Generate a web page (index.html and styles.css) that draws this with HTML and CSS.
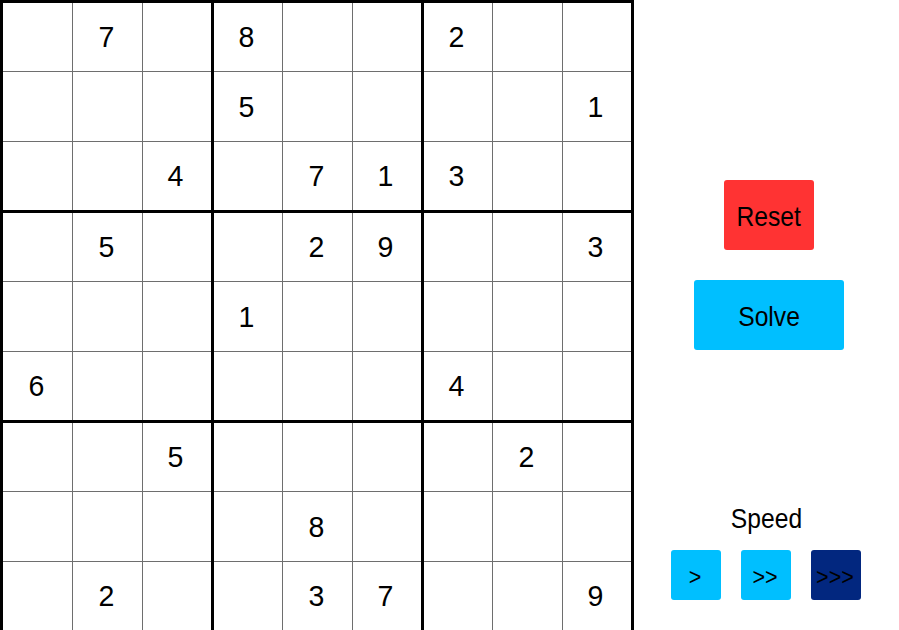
FILE: index.html
```html
<!DOCTYPE html>
<html>
<head>
<meta charset="utf-8">
<link rel="stylesheet" href="styles.css">
</head>
<body>
<div class="app">
  <div class="board">
    <div class="box c1"><div class="cell"></div><div class="cell"><span>7</span></div><div class="cell"></div><div class="cell"></div><div class="cell"></div><div class="cell"></div><div class="cell"></div><div class="cell"></div><div class="cell"><span>4</span></div></div>
    <div class="box"><div class="cell"><span>8</span></div><div class="cell"></div><div class="cell"></div><div class="cell"><span>5</span></div><div class="cell"></div><div class="cell"></div><div class="cell"></div><div class="cell"><span>7</span></div><div class="cell"><span>1</span></div></div>
    <div class="box"><div class="cell"><span>2</span></div><div class="cell"></div><div class="cell"></div><div class="cell"></div><div class="cell"></div><div class="cell"><span>1</span></div><div class="cell"><span>3</span></div><div class="cell"></div><div class="cell"></div></div>

    <div class="box c1"><div class="cell"></div><div class="cell"><span>5</span></div><div class="cell"></div><div class="cell"></div><div class="cell"></div><div class="cell"></div><div class="cell"><span>6</span></div><div class="cell"></div><div class="cell"></div></div>
    <div class="box"><div class="cell"></div><div class="cell"><span>2</span></div><div class="cell"><span>9</span></div><div class="cell"><span>1</span></div><div class="cell"></div><div class="cell"></div><div class="cell"></div><div class="cell"></div><div class="cell"></div></div>
    <div class="box"><div class="cell"></div><div class="cell"></div><div class="cell"><span>3</span></div><div class="cell"></div><div class="cell"></div><div class="cell"></div><div class="cell"><span>4</span></div><div class="cell"></div><div class="cell"></div></div>

    <div class="box c1"><div class="cell"></div><div class="cell"></div><div class="cell"><span>5</span></div><div class="cell"></div><div class="cell"></div><div class="cell"></div><div class="cell"></div><div class="cell"><span>2</span></div><div class="cell"></div></div>
    <div class="box"><div class="cell"></div><div class="cell"></div><div class="cell"></div><div class="cell"></div><div class="cell"><span>8</span></div><div class="cell"></div><div class="cell"></div><div class="cell"><span>3</span></div><div class="cell"><span>7</span></div></div>
    <div class="box"><div class="cell"></div><div class="cell"><span>2</span></div><div class="cell"></div><div class="cell"></div><div class="cell"></div><div class="cell"></div><div class="cell"></div><div class="cell"></div><div class="cell"><span>9</span></div></div>
  </div>
  <div class="panel">
    <div class="btn reset"><span class="lbl">Reset</span></div>
    <div class="btn solve"><span class="lbl">Solve</span></div>
    <div class="speed-label"><span class="lbl">Speed</span></div>
    <div class="speeds">
      <div class="sbtn light"><span>&gt;</span></div>
      <div class="sbtn light"><span>&gt;&gt;</span></div>
      <div class="sbtn dark"><span>&gt;&gt;&gt;</span></div>
    </div>
  </div>
</div>
</body>
</html>
```
FILE: styles.css
```css
html, body {
  margin: 0;
  padding: 0;
  background: #ffffff;
  overflow: hidden;
}
body {
  font-family: "Liberation Sans", Arial, sans-serif;
  color: #000;
}
.app {
  display: flex;
  width: 899px;
  height: 630px;
}
.board {
  flex: none;
  display: grid;
  grid-template-columns: 208px 207px 207px;
  grid-template-rows: 207px 207px 207px;
  gap: 3px;
  padding: 3px;
  background: #000;
  width: 628px;
  height: 627px;
}
.box {
  display: grid;
  grid-template-columns: 68px 69px 68px;
  grid-template-rows: 68px 69px 68px;
  gap: 1px;
  background: #6e6e6e;
}
.box.c1 {
  grid-template-columns: 69px 69px 68px;
}
.cell {
  background: #fff;
  display: flex;
  align-items: center;
  justify-content: center;
  font-size: 30px;
  line-height: 1;
}
.cell span {
  display: inline-block;
  padding-right: 3px;
  transform: scaleX(0.95);
}
.panel {
  flex: 1;
  display: flex;
  flex-direction: column;
  align-items: center;
  padding-top: 180px;
  padding-left: 5px;
}
.btn {
  height: 70px;
  border-radius: 3px;
  display: flex;
  align-items: center;
  justify-content: center;
  font-size: 28px;
}
.btn .lbl {
  padding-top: 3px;
}
.reset {
  width: 90px;
  background: #ff3333;
  margin-bottom: 30px;
}
.solve {
  width: 150px;
  background: #00bfff;
}
.lbl {
  display: inline-block;
  transform: scaleX(0.88);
}
.speed-label {
  margin-top: 153px;
  margin-right: 5px;
  height: 32px;
  line-height: 32px;
  font-size: 28px;
  margin-bottom: 15px;
}
.speeds {
  display: flex;
  gap: 20px;
  margin-right: 7px;
}
.sbtn {
  width: 50px;
  height: 50px;
  border-radius: 3px;
  display: flex;
  align-items: center;
  justify-content: center;
  font-size: 24px;
}
.sbtn span {
  display: inline-block;
  padding-top: 3px;
  transform: scaleX(0.9);
}
.light {
  background: #00bfff;
}
.dark {
  background: #02277f;
}
```
